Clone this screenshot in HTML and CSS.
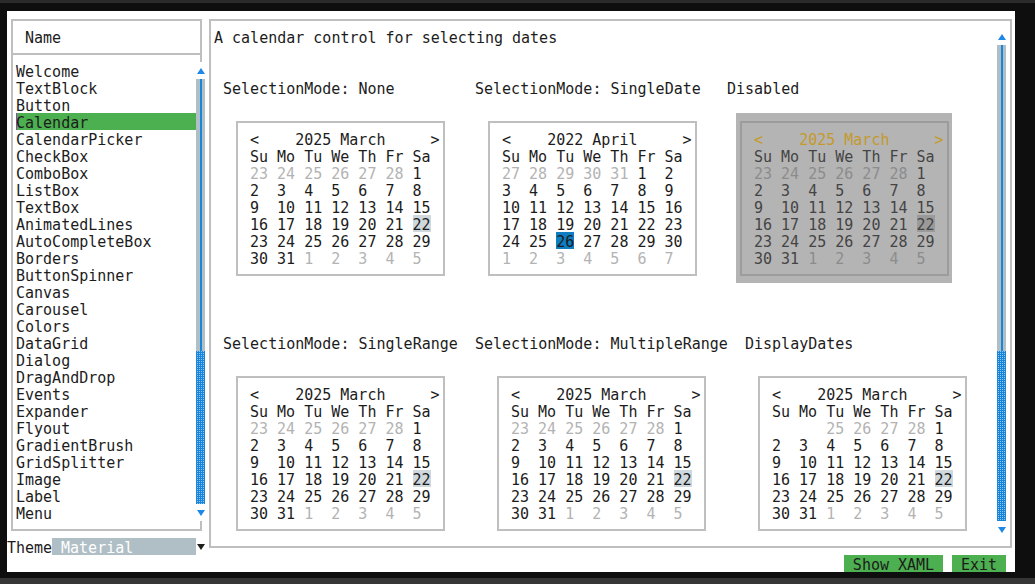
FILE: index.html
```html
<!DOCTYPE html>
<html lang="en">
<head>
<meta charset="utf-8">
<title>Calendar</title>
<link rel="stylesheet" href="styles.css">
</head>
<body>
<div class="frame">
<div class="screen">
  <div class="box name-head"><span>Name</span></div>
  <div class="box list-box"></div>
  <ul class="items">
    <li>Welcome</li>
    <li>TextBlock</li>
    <li>Button</li>
    <li class="sel">Calendar</li>
    <li>CalendarPicker</li>
    <li>CheckBox</li>
    <li>ComboBox</li>
    <li>ListBox</li>
    <li>TextBox</li>
    <li>AnimatedLines</li>
    <li>AutoCompleteBox</li>
    <li>Borders</li>
    <li>ButtonSpinner</li>
    <li>Canvas</li>
    <li>Carousel</li>
    <li>Colors</li>
    <li>DataGrid</li>
    <li>Dialog</li>
    <li>DragAndDrop</li>
    <li>Events</li>
    <li>Expander</li>
    <li>Flyout</li>
    <li>GradientBrush</li>
    <li>GridSplitter</li>
    <li>Image</li>
    <li>Label</li>
    <li>Menu</li>
  </ul>
  <div class="vscroll list-scroll">
    <div class="arrow"><span class="tri-up"></span></div>
    <div class="track track-list"></div>
    <div class="thumb thumb-list"></div>
    <div class="arrow"><span class="tri-down"></span></div>
  </div>
  <div class="theme-row">
    <span class="theme-label">Theme</span>
    <span class="combo"> Material</span>
    <span class="combo-arrow"><span class="tri-down dark"></span></span>
  </div>

  <div class="box main-box">
    <p class="desc">A calendar control for selecting dates</p>

    <div class="lbl l-none">SelectionMode: None</div>
    <div class="lbl l-single">SelectionMode: SingleDate</div>
    <div class="lbl l-disabled">Disabled</div>

    <div class="box cal c-none">
      <div class="ln hd">&lt;    2025 March     &gt;</div>
      <div class="ln">Su Mo Tu We Th Fr Sa</div>
      <div class="ln"><span class="o">23 24 25 26 27 28</span> 1</div>
      <div class="ln">2  3  4  5  6  7  8</div>
      <div class="ln">9  10 11 12 13 14 15</div>
      <div class="ln">16 17 18 19 20 21 <span class="t">22</span></div>
      <div class="ln">23 24 25 26 27 28 29</div>
      <div class="ln">30 31 <span class="o">1  2  3  4  5</span></div>
    </div>

    <div class="box cal c-single">
      <div class="ln hd">&lt;    2022 April     &gt;</div>
      <div class="ln">Su Mo Tu We Th Fr Sa</div>
      <div class="ln"><span class="o">27 28 29 30 31</span> 1  2</div>
      <div class="ln">3  4  5  6  7  8  9</div>
      <div class="ln">10 11 12 13 14 15 16</div>
      <div class="ln">17 18 19 20 21 22 23</div>
      <div class="ln">24 25 <span class="s">26</span> 27 28 29 30</div>
      <div class="ln"><span class="o">1  2  3  4  5  6  7</span></div>
    </div>

    <div class="box cal disabled c-disabled">
      <div class="ln hd">&lt;    2025 March     &gt;</div>
      <div class="ln">Su Mo Tu We Th Fr Sa</div>
      <div class="ln"><span class="o">23 24 25 26 27 28</span> 1</div>
      <div class="ln">2  3  4  5  6  7  8</div>
      <div class="ln">9  10 11 12 13 14 15</div>
      <div class="ln">16 17 18 19 20 21 <span class="t">22</span></div>
      <div class="ln">23 24 25 26 27 28 29</div>
      <div class="ln">30 31 <span class="o">1  2  3  4  5</span></div>
    </div>

    <div class="lbl l-range">SelectionMode: SingleRange</div>
    <div class="lbl l-multi">SelectionMode: MultipleRange</div>
    <div class="lbl l-display">DisplayDates</div>

    <div class="box cal c-range">
      <div class="ln hd">&lt;    2025 March     &gt;</div>
      <div class="ln">Su Mo Tu We Th Fr Sa</div>
      <div class="ln"><span class="o">23 24 25 26 27 28</span> 1</div>
      <div class="ln">2  3  4  5  6  7  8</div>
      <div class="ln">9  10 11 12 13 14 15</div>
      <div class="ln">16 17 18 19 20 21 <span class="t">22</span></div>
      <div class="ln">23 24 25 26 27 28 29</div>
      <div class="ln">30 31 <span class="o">1  2  3  4  5</span></div>
    </div>

    <div class="box cal c-multi">
      <div class="ln hd">&lt;    2025 March     &gt;</div>
      <div class="ln">Su Mo Tu We Th Fr Sa</div>
      <div class="ln"><span class="o">23 24 25 26 27 28</span> 1</div>
      <div class="ln">2  3  4  5  6  7  8</div>
      <div class="ln">9  10 11 12 13 14 15</div>
      <div class="ln">16 17 18 19 20 21 <span class="t">22</span></div>
      <div class="ln">23 24 25 26 27 28 29</div>
      <div class="ln">30 31 <span class="o">1  2  3  4  5</span></div>
    </div>

    <div class="box cal c-display">
      <div class="ln hd">&lt;    2025 March     &gt;</div>
      <div class="ln">Su Mo Tu We Th Fr Sa</div>
      <div class="ln">      <span class="o">25 26 27 28</span> 1</div>
      <div class="ln">2  3  4  5  6  7  8</div>
      <div class="ln">9  10 11 12 13 14 15</div>
      <div class="ln">16 17 18 19 20 21 <span class="t">22</span></div>
      <div class="ln">23 24 25 26 27 28 29</div>
      <div class="ln">30 31 <span class="o">1  2  3  4  5</span></div>
    </div>

    <div class="vscroll main-scroll">
      <div class="arrow"><span class="tri-up"></span></div>
      <div class="track track-main"></div>
      <div class="thumb thumb-main"></div>
      <div class="arrow"><span class="tri-down"></span></div>
    </div>
  </div>

  <div class="buttons">
    <button class="btn btn-xaml">Show XAML</button>
    <button class="btn btn-exit">Exit</button>
  </div>
</div>
</div>
</body>
</html>
```

FILE: styles.css
```css
* { box-sizing: border-box; }
html, body { margin: 0; padding: 0; }
body {
  background: #0e0e0e;
  width: 1035px;
  height: 584px;
  overflow: hidden;
  font-family: "DejaVu Sans Mono", "Liberation Mono", monospace;
  font-size: 15px;
  /* rows are 17px tall (fixed by the grid); the taller line box
     drops each glyph line 2px to sit like the terminal text */
  line-height: 21px;
  color: #1c1c1c;
}
.frame {
  height: 584px;
  border-top: 3px solid #2b2b2b;
  border-bottom: 6px solid #363636;
  padding: 8px 0 0 7px;
}
.screen {
  display: grid;
  grid-template-columns: repeat(112, 9px);
  grid-template-rows: repeat(33, 17px);
  width: 1008px;
  height: 561px;
  background: #ffffff;
}

/* box-drawing style borders through the middle of the character cells */
.box { position: relative; }
.box::before {
  content: "";
  position: absolute;
  top: 8px;
  left: 4px;
  right: 3px;
  bottom: 7px;
  border: 2px solid #bfbfbf;
  pointer-events: none;
}

/* left list */
.name-head { grid-column: 1 / 23; grid-row: 1 / 4; padding: 17px 0 0 18px; }
.name-head span { display: block; height: 17px; }
.list-box { grid-column: 1 / 23; grid-row: 3 / 32; }
.items {
  grid-column: 2 / 22;
  grid-row: 4 / 31;
  list-style: none;
  margin: 0;
  padding: 0;
  display: flex;
  flex-direction: column;
}
.items li { height: 17px; white-space: pre; }
.items li.sel { background: #4caf50; box-shadow: inset 1px 0 0 #9c3fb0; }

/* scrollbars */
.vscroll {
  position: relative;
  z-index: 1;
  display: flex;
  flex-direction: column;
  background: #ffffff;
}
.list-scroll { grid-column: 22 / 23; grid-row: 4 / 31; }
.arrow { height: 17px; flex: 0 0 17px; display: flex; align-items: center; justify-content: center; }
.tri-up {
  width: 0; height: 0;
  border-left: 4px solid transparent;
  border-right: 4px solid transparent;
  border-bottom: 6px solid #1e88e5;
}
.tri-down {
  width: 0; height: 0;
  border-left: 4px solid transparent;
  border-right: 4px solid transparent;
  border-top: 6px solid #1e88e5;
}
.tri-down.dark { border-top-color: #1e1e1e; }
.track {
  background: linear-gradient(to right, #b0bec5 4px, #1a86d9 4px, #1a86d9 6px, #b0bec5 6px);
}
.thumb {
  background-color: #1a84d8;
  background-image: conic-gradient(#8cc8f4 0 25%, #1a84d8 0);
  background-size: 2px 2px;
}
.track-list { flex: 0 0 272px; }
.thumb-list { flex: 0 0 153px; }
.track-main { flex: 0 0 306px; }
.thumb-main { flex: 0 0 170px; }

/* theme selector */
.theme-row { grid-column: 1 / 23; grid-row: 32 / 33; display: flex; }
.theme-label { width: 45px; }
.combo { width: 144px; background: #b0bec5; color: #ffffff; white-space: pre; }
.combo-arrow { width: 9px; display: flex; align-items: center; justify-content: center; }

/* main content */
.main-box {
  grid-column: 23 / 113;
  grid-row: 1 / 33;
  display: grid;
  grid-template-columns: repeat(90, 9px);
  grid-template-rows: repeat(32, 17px);
}
.desc { grid-area: 2 / 2 / 3 / 62; margin: 0; white-space: pre; }
.lbl { white-space: pre; }
.l-none { grid-area: 5 / 3 / 6 / 33; }
.l-single { grid-area: 5 / 31 / 6 / 61; }
.l-disabled { grid-area: 5 / 59 / 6 / 89; }
.l-range { grid-area: 20 / 3 / 21 / 33; }
.l-multi { grid-area: 20 / 31 / 21 / 61; }
.l-display { grid-area: 20 / 61 / 21 / 89; }

.c-none { grid-area: 7 / 4 / 17 / 28; }
.c-single { grid-area: 7 / 32 / 17 / 56; }
.c-disabled { grid-area: 7 / 60 / 17 / 84; }
.c-range { grid-area: 22 / 4 / 32 / 28; }
.c-multi { grid-area: 22 / 33 / 32 / 57; }
.c-display { grid-area: 22 / 62 / 32 / 86; }
.main-scroll { grid-area: 2 / 89 / 32 / 90; }

/* calendar */
.cal { padding: 17px 0 0 18px; }
.cal .ln { height: 17px; white-space: pre; }
.cal .o { color: #b3b3b3; }
.cal .t,
.cal .s { display: inline-block; height: 17px; vertical-align: top; }
.cal .t { background: #cfd8dc; }
.cal .s { background: #0f7dc2; }
.cal.disabled { background: #b4b4b4; color: #444444; }
.cal.disabled::before { border-color: #9c9c9c; }
.cal.disabled .hd { color: #c49a2c; }
.cal.disabled .o { color: #8c8c8c; }
.cal.disabled .t { background: #9a9a9a; }

/* buttons */
.buttons { grid-column: 94 / 112; grid-row: 33 / 34; display: flex; gap: 9px; }
.btn {
  border: 0;
  padding: 2px 0 0;
  margin: 0;
  font: inherit;
  line-height: 17px;
  color: #1c1c1c;
  background: #4caf50;
  height: 17px;
  overflow: visible;
}
.btn-xaml { width: 99px; }
.btn-exit { width: 54px; }
```
